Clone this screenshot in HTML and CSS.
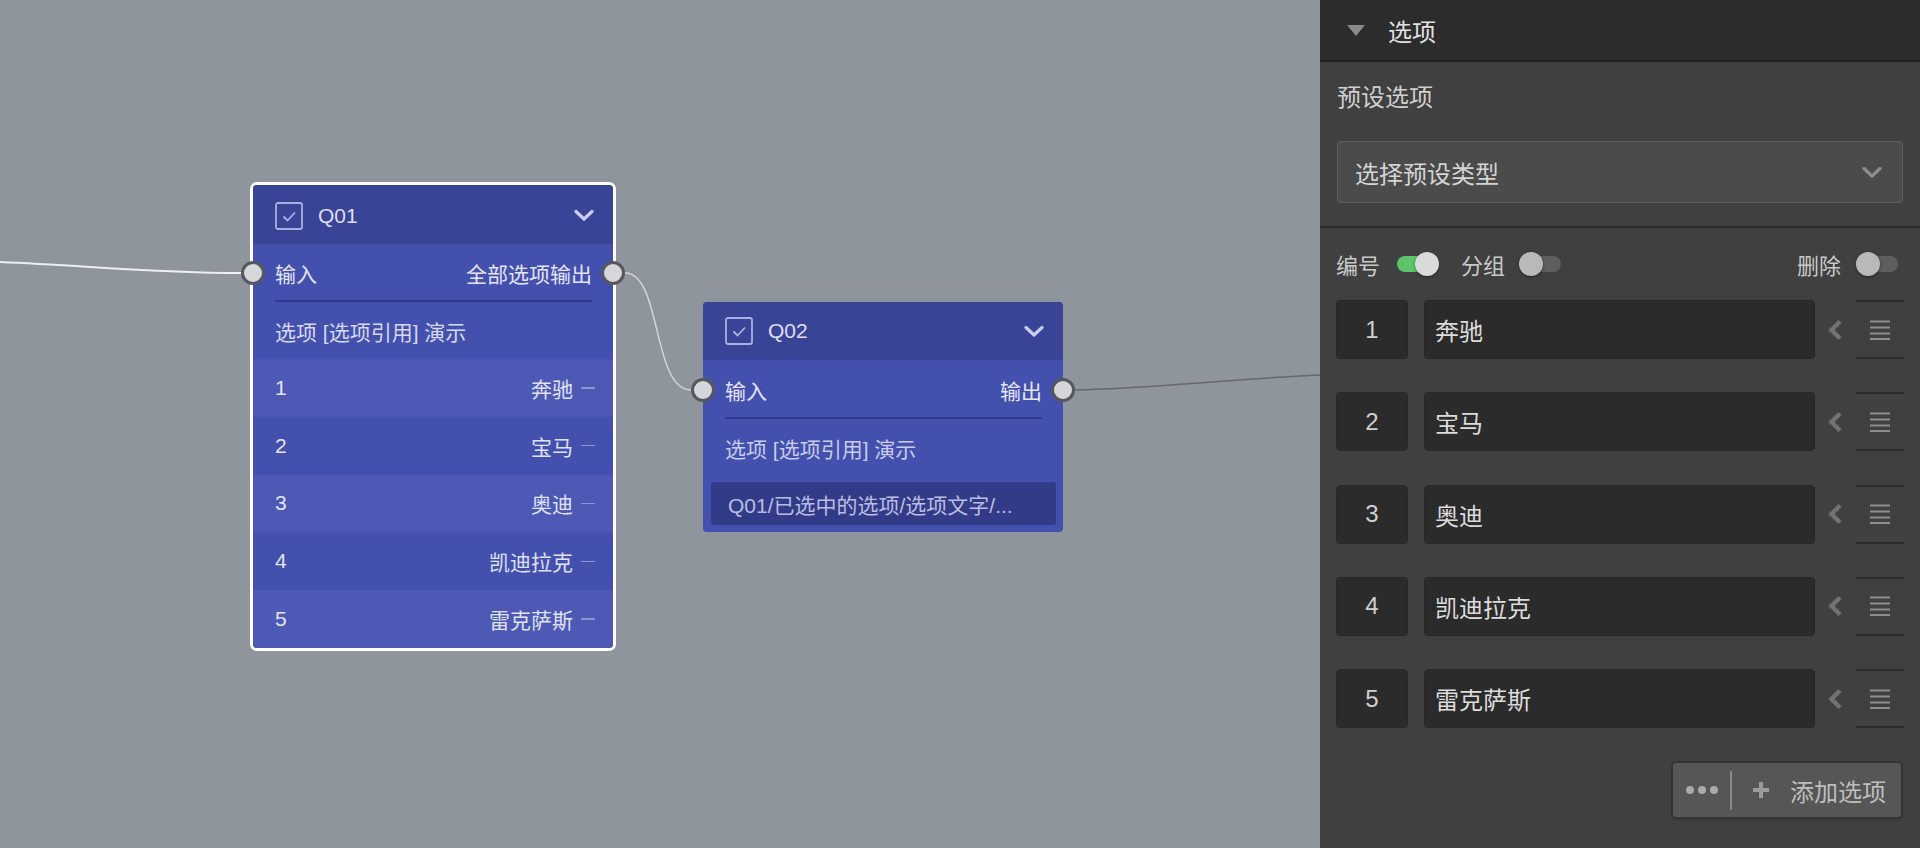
FILE: index.html
```html
<!DOCTYPE html>
<html lang="zh-CN">
<head>
<meta charset="utf-8">
<title>选项编辑器</title>
<link rel="stylesheet" href="styles.css">
</head>
<body>
<div class="app">
  <main class="canvas">
    <svg class="wires" width="1320" height="848" viewBox="0 0 1320 848">
      <path class="wire wire-in" d="M0 262 C 90 266, 160 273, 241 273"/>
      <path class="wire wire-mid" d="M625 273 C 662 273, 652 390, 691 390"/>
      <path class="wire wire-out" d="M1075 390 C 1160 388, 1230 379, 1320 375"/>
    </svg>

    <section class="node node-q01">
      <div class="node-head">
        <svg class="chk" width="28" height="28" viewBox="0 0 28 28"><rect x="1" y="1" width="26" height="26" rx="2"/><polyline points="8.5,14.5 12.5,18.5 20,10.5"/></svg>
        <span class="node-title">Q01</span>
        <svg class="node-chev" width="20" height="13" viewBox="0 0 20 13"><polyline points="2,2.5 10,10 18,2.5"/></svg>
      </div>
      <div class="node-ports">
        <span class="port port-in"></span>
        <span>输入</span>
        <span>全部选项输出</span>
        <span class="port port-out"></span>
      </div>
      <div class="node-label">选项 [选项引用] 演示</div>
      <div class="node-row alt"><span>1</span><span class="opt">奔驰<i class="dash"></i></span></div>
      <div class="node-row"><span>2</span><span class="opt">宝马<i class="dash"></i></span></div>
      <div class="node-row alt"><span>3</span><span class="opt">奥迪<i class="dash"></i></span></div>
      <div class="node-row"><span>4</span><span class="opt">凯迪拉克<i class="dash"></i></span></div>
      <div class="node-row alt last"><span>5</span><span class="opt">雷克萨斯<i class="dash"></i></span></div>
    </section>

    <section class="node node-q02">
      <div class="node-head">
        <svg class="chk" width="28" height="28" viewBox="0 0 28 28"><rect x="1" y="1" width="26" height="26" rx="2"/><polyline points="8.5,14.5 12.5,18.5 20,10.5"/></svg>
        <span class="node-title">Q02</span>
        <svg class="node-chev" width="20" height="13" viewBox="0 0 20 13"><polyline points="2,2.5 10,10 18,2.5"/></svg>
      </div>
      <div class="node-ports">
        <span class="port port-in"></span>
        <span>输入</span>
        <span>输出</span>
        <span class="port port-out"></span>
      </div>
      <div class="node-label muted">选项 [选项引用] 演示</div>
      <div class="node-ref">Q01/已选中的选项/选项文字/...</div>
    </section>
  </main>

  <aside class="panel">
    <header class="panel-head">
      <span class="tri"></span>
      <span class="panel-title">选项</span>
    </header>

    <div class="preset">
      <div class="preset-label">预设选项</div>
      <div class="select">
        <span>选择预设类型</span>
        <svg class="select-chev" width="20" height="13" viewBox="0 0 20 13"><polyline points="2,2.5 10,10 18,2.5"/></svg>
      </div>
    </div>

    <div class="opts">
      <div class="toggles">
        <span>编号</span>
        <span class="toggle on t-num"><span class="track"></span><span class="knob"></span></span>
        <span class="t-label">分组</span>
        <span class="toggle t-group"><span class="track"></span><span class="knob"></span></span>
        <span class="spacer"></span>
        <span>删除</span>
        <span class="toggle t-del"><span class="track"></span><span class="knob"></span></span>
      </div>

      <div class="opt-list">
        <div class="opt-row">
          <div class="num">1</div>
          <div class="txt">奔驰</div>
          <svg class="back" width="16" height="22" viewBox="0 0 16 22"><polyline points="13,2.5 4.5,11 13,19.5"/></svg>
          <div class="handle"><svg width="20" height="20" viewBox="0 0 20 20"><path d="M0 1.5H20M0 7.5H20M0 13.5H20M0 19H20"/></svg></div>
        </div>
        <div class="opt-row">
          <div class="num">2</div>
          <div class="txt">宝马</div>
          <svg class="back" width="16" height="22" viewBox="0 0 16 22"><polyline points="13,2.5 4.5,11 13,19.5"/></svg>
          <div class="handle"><svg width="20" height="20" viewBox="0 0 20 20"><path d="M0 1.5H20M0 7.5H20M0 13.5H20M0 19H20"/></svg></div>
        </div>
        <div class="opt-row">
          <div class="num">3</div>
          <div class="txt">奥迪</div>
          <svg class="back" width="16" height="22" viewBox="0 0 16 22"><polyline points="13,2.5 4.5,11 13,19.5"/></svg>
          <div class="handle"><svg width="20" height="20" viewBox="0 0 20 20"><path d="M0 1.5H20M0 7.5H20M0 13.5H20M0 19H20"/></svg></div>
        </div>
        <div class="opt-row">
          <div class="num">4</div>
          <div class="txt">凯迪拉克</div>
          <svg class="back" width="16" height="22" viewBox="0 0 16 22"><polyline points="13,2.5 4.5,11 13,19.5"/></svg>
          <div class="handle"><svg width="20" height="20" viewBox="0 0 20 20"><path d="M0 1.5H20M0 7.5H20M0 13.5H20M0 19H20"/></svg></div>
        </div>
        <div class="opt-row">
          <div class="num">5</div>
          <div class="txt">雷克萨斯</div>
          <svg class="back" width="16" height="22" viewBox="0 0 16 22"><polyline points="13,2.5 4.5,11 13,19.5"/></svg>
          <div class="handle"><svg width="20" height="20" viewBox="0 0 20 20"><path d="M0 1.5H20M0 7.5H20M0 13.5H20M0 19H20"/></svg></div>
        </div>
      </div>

      <div class="add-row">
        <button class="add-btn">
          <span class="dots"><i></i><i></i><i></i></span>
          <span class="vsep"></span>
          <svg class="plus" width="16" height="16" viewBox="0 0 16 16"><path d="M8 0V16M0 8H16"/></svg>
          <span class="add-text">添加选项</span>
        </button>
      </div>
    </div>
  </aside>
</div>
</body>
</html>
```

FILE: styles.css
```css
* {
  box-sizing: border-box;
  margin: 0;
  padding: 0;
}

body {
  width: 1920px;
  height: 848px;
  overflow: hidden;
  font-family: "Liberation Sans", "Noto Sans CJK SC", sans-serif;
}

.app {
  display: flex;
  height: 848px;
}

/* ---------- canvas ---------- */
.canvas {
  position: relative;
  flex: 1;
  background: #8f959c;
  overflow: hidden;
}

.wires {
  position: absolute;
  left: 0;
  top: 0;
}

.wire { fill: none; }
.wire-in { stroke: #efefef; stroke-width: 2; }
.wire-mid { stroke: #d4d4d4; stroke-width: 1.5; }
.wire-out { stroke: #686868; stroke-width: 1.5; }

.node {
  position: absolute;
  width: 360px;
  background: #4350ae;
  border-radius: 4px;
  color: #e3e5f6;
  font-size: 21px;
}

.node-q01 {
  left: 250px;
  top: 182px;
  width: 366px;
  border: 3px solid #ffffff;
  border-radius: 7px;
}

.node-q02 {
  left: 703px;
  top: 302px;
}

.node-head {
  height: 58px;
  background: #3a4497;
  border-radius: 4px 4px 0 0;
  display: flex;
  align-items: center;
  padding: 0 19px 0 22px;
}

.node-q01 .node-head {
  height: 59px;
  padding-top: 2px;
}

.chk rect,
.chk polyline {
  fill: none;
  stroke: #aab0e1;
  stroke-width: 1.8;
}

.node-title {
  flex: 1;
  margin-left: 15px;
  color: #dcdff3;
}

.node-chev polyline {
  fill: none;
  stroke: #c9cdf0;
  stroke-width: 3.2;
  stroke-linecap: round;
  stroke-linejoin: round;
}

.node-ports {
  position: relative;
  height: 59px;
  margin: 0 21px 0 22px;
  padding-top: 2px;
  border-bottom: 2px solid #2f3a8c;
  display: flex;
  align-items: center;
  justify-content: space-between;
}

.node-q01 .node-ports {
  height: 58px;
}

.port {
  position: absolute;
  top: 18px;
  width: 24px;
  height: 24px;
  border-radius: 50%;
  background: #d6d7da;
  border: 3px solid #55585e;
}

.node-q01 .port { top: 17px; }

.port-in { left: -34px; }
.port-out { right: -33px; }

.node-label {
  height: 57px;
  display: flex;
  align-items: center;
  padding-left: 22px;
  color: #d6d9f1;
}

.node-label.muted { color: #c7cbec; }

.node-row {
  height: 57.8px;
  display: flex;
  align-items: center;
  justify-content: space-between;
  padding: 0 18px 0 22px;
}

.node-row.alt { background: #4e59b5; }
.node-row.last { border-radius: 0 0 4px 4px; }

.opt {
  display: flex;
  align-items: center;
  gap: 8px;
  color: #dfe2f5;
}

.dash {
  display: block;
  width: 14px;
  height: 1.5px;
  background: #8c94d2;
}

.node-ref {
  margin: 6px 7px 7px 8px;
  height: 43px;
  background: #323b88;
  border-radius: 3px;
  padding-left: 17px;
  display: flex;
  align-items: center;
  color: #b9bde1;
  white-space: nowrap;
}

/* ---------- panel ---------- */
.panel {
  width: 600px;
  flex: none;
  background: #404040;
  display: flex;
  flex-direction: column;
  color: #d0d0d0;
}

.panel-head {
  height: 62px;
  background: #2c2c2c;
  border-bottom: 2px solid #232323;
  display: flex;
  align-items: center;
  padding-left: 27px;
}

.tri {
  width: 0;
  height: 0;
  border-left: 9px solid transparent;
  border-right: 9px solid transparent;
  border-top: 11px solid #8a8a8a;
}

.panel-title {
  margin-left: 23px;
  font-size: 24px;
  color: #e2e2e2;
}

.preset {
  height: 166px;
  padding: 22px 17px 0;
  border-bottom: 2px solid #2a2a2a;
}

.preset-label {
  font-size: 24px;
  line-height: 28px;
  color: #cfcfcf;
}

.select {
  margin-top: 29px;
  height: 62px;
  background: #4b4b4b;
  border: 1px solid #5e5e5e;
  border-radius: 4px;
  display: flex;
  align-items: center;
  justify-content: space-between;
  padding: 0 20px 0 17px;
  font-size: 24px;
  color: #d4d4d4;
}

.select-chev polyline {
  fill: none;
  stroke: #8d8d8d;
  stroke-width: 3.2;
  stroke-linecap: round;
  stroke-linejoin: round;
}

.opts {
  padding: 18px 16px 0;
  display: flex;
  flex-direction: column;
}

.toggles {
  height: 36px;
  display: flex;
  align-items: center;
  font-size: 22px;
  color: #c9c9c9;
}

.spacer { flex: 1; }

.toggle {
  position: relative;
  flex: none;
  width: 42px;
  height: 24px;
}

.track {
  position: absolute;
  left: 0;
  right: 0;
  top: 4px;
  height: 16px;
  border-radius: 8px;
  background: #5e5e5e;
}

.knob {
  position: absolute;
  top: 0;
  left: 0;
  width: 24px;
  height: 24px;
  border-radius: 50%;
  background: #b9b9b9;
  box-shadow: 0 1px 3px rgba(0, 0, 0, 0.45);
}

.toggle.on .track {
  background: #5cc46c;
  right: 1px;
}

.toggle.on .knob {
  left: auto;
  right: 0;
  background: #dadada;
}

.t-num { margin-left: 17px; }
.t-label { margin-left: 22px; }
.t-group { margin-left: 14px; }
.t-del { margin-left: 15px; margin-right: 6px; }

.opt-list {
  margin-top: 18px;
  display: flex;
  flex-direction: column;
  gap: 33.25px;
}

.opt-row {
  height: 59px;
  display: flex;
  align-items: center;
}

.num {
  width: 72px;
  height: 59px;
  flex: none;
  background: #2b2b2b;
  border: 1px solid #272727;
  border-radius: 4px;
  display: flex;
  align-items: center;
  justify-content: center;
  font-size: 24px;
  color: #d0d0d0;
}

.txt {
  flex: 1;
  height: 59px;
  margin-left: 16px;
  background: #2b2b2b;
  border: 1px solid #272727;
  border-radius: 4px;
  padding-left: 10px;
  display: flex;
  align-items: center;
  font-size: 24px;
  color: #dcdcdc;
}

.back {
  flex: none;
  margin-left: 12px;
}

.back polyline {
  fill: none;
  stroke: #727272;
  stroke-width: 4.5;
  stroke-linejoin: miter;
}

.handle {
  width: 48px;
  height: 59px;
  flex: none;
  margin-left: 13px;
  border-top: 2px solid #2b2b2b;
  border-bottom: 2px solid #2b2b2b;
  display: flex;
  align-items: center;
  justify-content: center;
}

.handle path {
  stroke: #8e8e8e;
  stroke-width: 2;
  fill: none;
}

.add-row {
  margin-top: 33px;
  display: flex;
  justify-content: flex-end;
  padding-right: 1px;
}

.add-btn {
  width: 232px;
  height: 58px;
  background: #565656;
  border: 2px solid #343434;
  border-radius: 5px;
  box-shadow: 0 2px 0 #3a3a3a;
  display: flex;
  align-items: center;
  padding-left: 13px;
  font-family: inherit;
  cursor: pointer;
}

.dots {
  display: flex;
  gap: 4px;
}

.dots i {
  display: block;
  width: 8px;
  height: 8px;
  border-radius: 50%;
  background: #a9a9a9;
}

.vsep {
  width: 2px;
  height: 39px;
  margin-left: 12px;
  background: #8a8a8a;
}

.plus {
  margin-left: 21px;
}

.plus path {
  stroke: #9c9c9c;
  stroke-width: 4;
  fill: none;
}

.add-text {
  margin-left: 21px;
  font-size: 24px;
  color: #bebebe;
}
```
